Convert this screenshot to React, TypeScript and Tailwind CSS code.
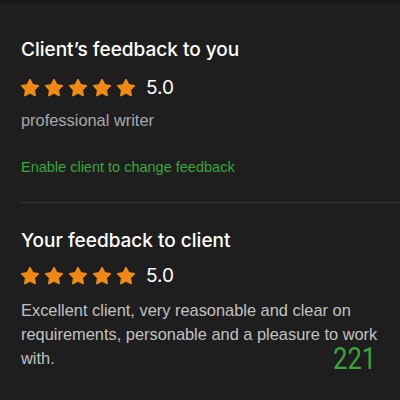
const body = { fontFamily: '"Liberation Sans", Arial, sans-serif' };
const heading = { fontFamily: 'Inter, "Liberation Sans", Arial, sans-serif' };
const counter = { fontFamily: 'Roboto, "Liberation Sans", Arial, sans-serif' };

function StarIcon() {
  return (
    <svg viewBox="0 0 24 24" className="w-[20px] h-[20px]">
      <polygon
        points="12,2 15.09,8.26 22,9.27 17,14.14 18.18,21.02 12,17.77 5.82,21.02 7,14.14 2,9.27 8.91,8.26"
        fill="#ef8a17"
        stroke="#ef8a17"
        strokeWidth={2}
        strokeLinejoin="round"
      />
    </svg>
  );
}

function Stars() {
  return (
    <div className="flex items-center gap-[4px] -ml-px">
      {[0, 1, 2, 3, 4].map((i) => (
        <StarIcon key={i} />
      ))}
      <span style={heading} className="ml-[6px] text-[19px] leading-[20px] text-white">5.0</span>
    </div>
  );
}

export default function App() {
  return (
    <div style={body} className="w-[400px] h-[400px] bg-[#1e1e1e] overflow-hidden relative">
      <div className="h-[4px] bg-[#181818]" />
      <section className="pl-[21px] pr-3 pt-[34px]">
        <h2 style={heading} className="text-[19px] leading-[24px] font-medium text-white">Client’s feedback to you</h2>
        <div className="mt-[16px]">
          <Stars />
        </div>
        <p className="mt-[10px] text-[16.4px] leading-[24px] text-[#a9a9a9]">professional writer</p>
        <button className="mt-[25px] text-[14.5px] leading-[20px] text-[#3ba63b]">Enable client to change feedback</button>
      </section>
      <div className="ml-[20px] mt-[23px] h-px bg-[#353535]" />
      <section className="pl-[21px] pr-3 pt-[26px]">
        <h2 style={heading} className="text-[19px] leading-[24px] font-medium text-white">Your feedback to client</h2>
        <div className="mt-[13px]">
          <Stars />
        </div>
        <p className="mt-[12px] text-[16.4px] leading-[24px] text-[#c2c2c2]">
          Excellent client, very reasonable and clear on requirements, personable and a pleasure to work with.
        </p>
      </section>
      <span
        style={counter}
        className="absolute left-[333px] top-[342px] text-[32px] leading-[32px] font-normal text-[#3ea23e] scale-x-[0.8] origin-left"
      >
        221
      </span>
    </div>
  );
}
